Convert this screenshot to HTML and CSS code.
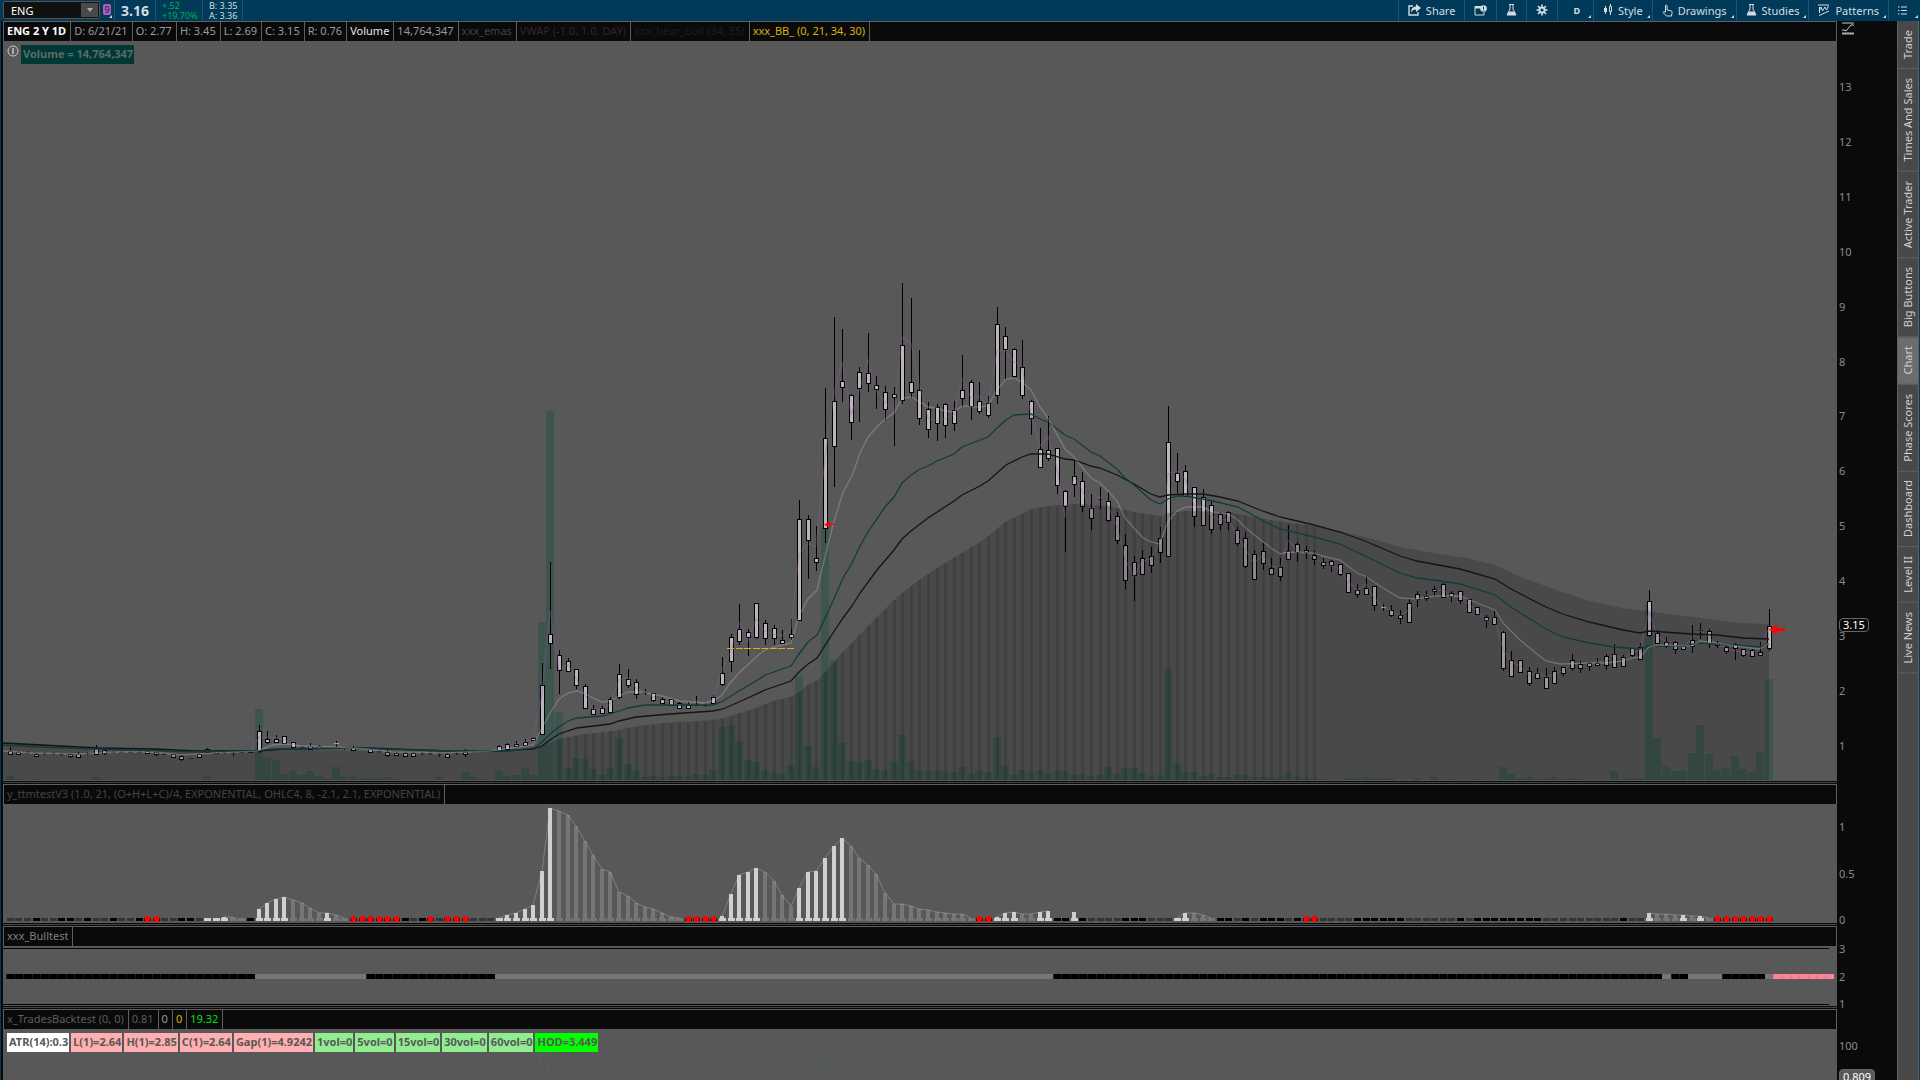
FILE: index.html
```html
<!DOCTYPE html>
<html lang="en">
<head>
    <meta charset="UTF-8">
    <meta name="viewport" content="width=device-width, initial-scale=1.0">
    <title>ENG 2 Y 1D</title>
    <link rel="stylesheet" href="styles.css">
</head>
<body>
    <header class="toolbar">
        <form class="symbol">
            <input class="symbol-input" type="text" value="ENG" aria-label="Symbol">
            <button class="symbol-drop" type="button" aria-label="Symbol list"><svg width="8" height="5" viewBox="0 0 8 5"><path d="M1 0h6L4 4z" fill="#aaa"/></svg></button>
        </form>
        <button class="link-badge corner" type="button" aria-label="Link group 9"><span>9</span></button>
        <div class="quote last">3.16</div>
        <div class="quote change"><span>+.52</span><span>+19.70%</span></div>
        <div class="quote bidask"><span>B: 3.35</span><span>A: 3.36</span></div>
        <nav class="tools">
            <button class="tool" type="button">
                <svg width="13" height="12" viewBox="0 0 13 12"><path d="M5 2H1v9h9V8" fill="none" stroke="#d4dde2" stroke-width="1.4"/><path d="M8 0l5 4-5 4V5.500C5.500 5.500 4 6.500 3 8.500 3 5 5 2.600 8 2.500z" fill="#d4dde2"/></svg>
                Share
            </button>
            <button class="tool" type="button" aria-label="Detach">
                <svg width="13" height="11" viewBox="0 0 13 11"><path d="M7 1.500H1v8.500h9V7" fill="none" stroke="#d4dde2"/><path d="M1 2.500h6" stroke="#d4dde2" stroke-width="2"/><circle cx="9.500" cy="3.500" r="3.300" fill="#d4dde2"/><path d="M9.500 1.500v2.500M9.500 4.700v1" stroke="#003a58"/></svg>
            </button>
            <button class="tool" type="button" aria-label="Study lab">
                <svg width="11" height="12" viewBox="0 0 11 12"><path d="M3 .5h5M4 .5v4.500L1 11h9L7 5V.5" fill="none" stroke="#d4dde2"/><path d="M3 7.500h5L10 11H1z" fill="#d4dde2"/></svg>
            </button>
            <button class="tool" type="button" aria-label="Settings">
                <svg width="12" height="12" viewBox="0 0 12 12"><path d="M6 .5v11M.5 6h11M2 2l8 8M10 2l-8 8" stroke="#d4dde2" stroke-width="1.600"/><circle cx="6" cy="6" r="3.500" fill="#d4dde2"/><circle cx="6" cy="6" r="1.600" fill="#003a58"/></svg>
            </button>
            <button class="tool period corner" type="button">D</button>
            <button class="tool corner" type="button">
                <svg width="10" height="12" viewBox="0 0 10 12"><path d="M2.500 2v8M7.500 0v11" stroke="#d4dde2"/><path d="M1 4h3v4H1z" fill="#d4dde2"/><path d="M6.500 2.500h2v5h-2z" fill="#003a58" stroke="#d4dde2"/></svg>
                Style
            </button>
            <button class="tool corner" type="button">
                <svg width="11" height="13" viewBox="0 0 11 13"><path d="M3.500 8V1.500q.8-1 1.600 0V6l4 .8q1.200.4 1 1.700L9.500 12h-5L1 8.500Q1.300 7.300 3.500 8z" fill="none" stroke="#d4dde2"/></svg>
                Drawings
            </button>
            <button class="tool corner" type="button">
                <svg width="11" height="12" viewBox="0 0 11 12"><path d="M3 .5h5M4 .5v4.500L1 11h9L7 5V.5" fill="none" stroke="#d4dde2"/><path d="M3 7.500h5L10 11H1z" fill="#d4dde2"/></svg>
                Studies
            </button>
            <button class="tool corner" type="button">
                <svg width="12" height="12" viewBox="0 0 12 12"><path d="M0 1h11M1 11.500L11 7M1 7l2-4 1.500 4L7 3l1.500 3L10.500 2M1.500 3v6" fill="none" stroke="#d4dde2"/></svg>
                Patterns
            </button>
            <button class="tool menu corner" type="button" aria-label="Menu">
                <svg width="9" height="9" viewBox="0 0 9 9"><path d="M0 1h1.500M0 4.500h1.500M0 8h1.500M3 1h6M3 4.500h6M3 8h6" stroke="#d4dde2"/></svg>
            </button>
        </nav>
    </header>

    <div class="workspace">
        <main class="charts">
            <section class="panel price-panel">
                <div class="panel-head">
                    <span class="cell bold">ENG 2 Y 1D</span>
                    <span class="cell">D: 6/21/21</span>
                    <span class="cell">O: 2.77</span>
                    <span class="cell">H: 3.45</span>
                    <span class="cell">L: 2.69</span>
                    <span class="cell">C: 3.15</span>
                    <span class="cell">R: 0.76</span>
                    <span class="cell white">Volume</span>
                    <span class="cell">14,764,347</span>
                    <span class="cell dim">xxx_emas</span>
                    <span class="cell plum">VWAP (-1.0, 1.0, DAY)</span>
                    <span class="cell faint">xxx_bear_bull (34, 55)</span>
                    <span class="cell gold">xxx_BB_ (0, 21, 34, 30)</span>
                </div>
                <div class="plot">
                    <svg id="price" class="canvas" viewBox="3 41 1834 740" preserveAspectRatio="none"></svg>
                    <div class="plot-labels">
                        <svg width="12" height="12" viewBox="0 0 12 12"><circle cx="6" cy="6" r="5" fill="none" stroke="#c8c8c8"/><path d="M6 3v6" stroke="#c8c8c8" stroke-width="1.500"/></svg>
                        <span class="volume-label">Volume = 14,764,347</span>
                    </div>
                </div>
                <div class="axis price-axis">
                    <svg class="axis-icon" width="14" height="13" viewBox="0 0 14 13"><path d="M1 1h12" stroke="#ccc"/><path d="M1 11.500h12" stroke="#aaa" stroke-width="2"/><path d="M1 8h2l2 1 5-6h3" fill="none" stroke="#ccc"/></svg>
                    <ol class="ticks">
                        <li>13</li><li>12</li><li>11</li><li>10</li><li>9</li><li>8</li><li>7</li><li>6</li><li>5</li><li>4</li><li>3</li><li>2</li><li>1</li>
                    </ol>
                    <span class="tag last-tag">3.15</span>
                </div>
            </section>

            <section class="panel squeeze-panel">
                <div class="panel-head">
                    <span class="cell dim">y_ttmtestV3 (1.0, 21, (O+H+L+C)/4, EXPONENTIAL, OHLC4, 8, -2.1, 2.1, EXPONENTIAL)</span>
                </div>
                <div class="plot"><svg id="squeeze" class="canvas" viewBox="3 804 1834 119" preserveAspectRatio="none"></svg></div>
                <div class="axis squeeze-axis"><span>1</span><span>0.5</span><span>0</span></div>
            </section>

            <section class="panel bull-panel">
                <div class="panel-head"><span class="cell soft">xxx_Bulltest</span></div>
                <div class="plot"><svg id="bull" class="canvas" viewBox="3 946 1834 60" preserveAspectRatio="none"></svg></div>
                <div class="axis bull-axis"><span>3</span><span>2</span><span>1</span></div>
            </section>

            <section class="panel trades-panel">
                <div class="panel-head">
                    <span class="cell soft2">x_TradesBacktest (0, 0)</span>
                    <span class="cell soft2">0.81</span>
                    <span class="cell">0</span>
                    <span class="cell gold">0</span>
                    <span class="cell green">19.32</span>
                </div>
                <div class="plot">
                    <svg id="trades" class="canvas" viewBox="3 1029 1834 51" preserveAspectRatio="none"></svg>
                    <div class="chips">
                        <span class="chip">ATR(14):0.3</span>
                        <span class="chip pink">L(1)=2.64</span>
                        <span class="chip pink">H(1)=2.85</span>
                        <span class="chip pink">C(1)=2.64</span>
                        <span class="chip pink">Gap(1)=4.9242</span>
                        <span class="chip mint">1vol=0</span>
                        <span class="chip mint">5vol=0</span>
                        <span class="chip mint">15vol=0</span>
                        <span class="chip mint">30vol=0</span>
                        <span class="chip mint">60vol=0</span>
                        <span class="chip lime">HOD=3.449</span>
                    </div>
                </div>
                <div class="axis trades-axis"><span>100</span><span class="tag study-tag">0.809</span></div>
            </section>
        </main>

        <aside class="gadgets">
            <button class="gadget" type="button">Trade</button>
            <button class="gadget" type="button">Times And Sales</button>
            <button class="gadget" type="button">Active Trader</button>
            <button class="gadget" type="button">Big Buttons</button>
            <button class="gadget active" type="button">Chart</button>
            <button class="gadget" type="button">Phase Scores</button>
            <button class="gadget" type="button">Dashboard</button>
            <button class="gadget" type="button">Level II</button>
            <button class="gadget" type="button">Live News</button>
        </aside>
    </div>

    <script src="chart.js"></script>
</body>
</html>
```
FILE: styles.css
```css
* {
    box-sizing: border-box;
}

body {
    display: flex;
    flex-direction: column;
    height: 100vh;
    margin: 0;
    overflow: hidden;
    background-color: #003a58;
    color: #9a9a9a;
    font-family: "Noto Sans", "Open Sans", sans-serif;
    font-size: 11px;
}

button, input {
    margin: 0;
    padding: 0;
    border: 0;
    background: none;
    color: inherit;
    font: inherit;
}

/* top toolbar */
.toolbar {
    display: flex;
    flex: none;
    height: 21px;
    padding-left: 3px;
    color: #d4dde2;
}

.symbol {
    display: flex;
    width: 97px;
    height: 18px;
    margin-top: 1px;
    border: 1px solid #555;
    border-radius: 2px;
    background-color: #111;
}

.symbol-input {
    flex: 1;
    min-width: 0;
    padding-left: 7px;
    color: #fff;
}

.symbol-drop {
    display: flex;
    align-items: center;
    justify-content: center;
    width: 17px;
    margin: 1px;
    background-color: #4a4a4a;
}

.link-badge {
    width: 14px;
    padding-left: 3px;
    text-align: left;
}

.link-badge span {
    display: block;
    width: 8px;
    height: 11px;
    margin-bottom: 3px;
    border-radius: 2px;
    background-color: #b45ac8;
    color: #222;
    font-size: 9px;
    line-height: 11px;
    text-align: center;
}

.quote {
    display: flex;
    flex-direction: column;
    justify-content: center;
    padding: 0 6px;
    border-left: 1px solid #1d5470;
    line-height: 10px;
}

.last {
    width: 41px;
    font-size: 14px;
    font-weight: bold;
}

.change {
    width: 47px;
    color: #00b050;
    font-size: 9px;
}

.bidask {
    width: 41px;
    border-right: 1px solid #1d5470;
    font-size: 9px;
    white-space: nowrap;
}

.tools {
    display: flex;
    margin-left: auto;
}

.tool {
    display: flex;
    align-items: center;
    gap: 5px;
    padding: 0 9px 1px;
    border-left: 1px solid #1d5470;
}

.tool.period {
    padding: 0 13px 1px 15px;
    font-size: 9px;
    font-weight: bold;
}

.tool.menu {
    padding-right: 13px;
}

.corner {
    position: relative;
}

.corner::after {
    content: "";
    position: absolute;
    right: 2px;
    bottom: 3px;
    border-left: 3px solid transparent;
    border-bottom: 3px solid #d4dde2;
}

/* workspace */
.workspace {
    display: flex;
    flex: 1;
    min-height: 0;
    padding-right: 1px;
    border-left: 1px solid #003a58;
}

.charts {
    display: flex;
    flex: 1;
    flex-direction: column;
    gap: 3px;
    min-width: 0;
    padding-left: 2px;
    background: #0a0a0a;
}

.panel {
    position: relative;
    display: grid;
    grid-template-columns: minmax(0, 1fr) 60px;
    grid-template-rows: 20px minmax(0, 1fr);
}

/* thin rule inside the gap between two panels */
.panel + .panel::before {
    content: "";
    position: absolute;
    top: -2px;
    left: 0;
    right: 60px;
    height: 1px;
    background-color: #444;
}

.price-panel {
    flex: 1;
    min-height: 0;
}

.squeeze-panel {
    height: 139px;
}

.bull-panel {
    height: 80px;
}

.trades-panel {
    height: 71px;
}

.panel-head {
    display: flex;
    border: 1px solid #606060;
    border-bottom: 0;
    background-color: #0a0a0a;
    white-space: nowrap;
    overflow: hidden;
}

.cell {
    padding: 0 4px 0 3px;
    border-right: 1px solid #606060;
    line-height: 18px;
}

.bold {
    color: #fff;
    font-weight: bold;
}

.white { color: #e8e8e8; }
.dim { color: #444; }
.soft { color: #808080; }
.soft2 { color: #5c5c5c; }
.plum { color: #35203a; }
.faint { color: #1e1e1e; }
.gold { color: #d8b010; }
.green { color: #00e010; }

.plot {
    position: relative;
    grid-column: 1;
    background-color: #585858;
    overflow: hidden;
}

.canvas {
    position: absolute;
    inset: 0;
    width: 100%;
    height: 100%;
}

.plot-labels {
    position: relative;
    display: flex;
    gap: 2px;
    padding: 4px 4px;
}

.volume-label {
    padding: 0 1px 1px 2px;
    background-color: #003835;
    color: #5a6a68;
    font-weight: bold;
    line-height: 18px;
}

/* value axes */
.axis {
    position: relative;
    display: flex;
    flex-direction: column;
    grid-column: 2;
    grid-row: 1 / 3;
    padding-left: 2px;
    background-color: #0a0a0a;
    color: #8a8a8a;
    line-height: 12px;
    overflow: hidden;
}

.axis-icon {
    position: absolute;
    top: 1px;
    left: 4px;
}

.price-axis {
    padding-top: 39px;
    padding-bottom: 8px;
}

.ticks {
    display: flex;
    flex: 1;
    flex-direction: column;
    margin: 0;
    padding: 0;
    list-style: none;
}

.ticks li {
    display: flex;
    flex: 1;
    align-items: center;
}

.squeeze-axis {
    justify-content: space-between;
    margin-bottom: -3px;
    padding-top: 37px;
}

.bull-axis {
    justify-content: space-between;
    margin-bottom: -4px;
    padding-top: 17px;
}

.trades-axis {
    padding-top: 31px;
}

.tag {
    position: absolute;
    left: 2px;
    padding: 0 3px;
    border: 1px solid #666;
    border-radius: 4px;
    background-color: #0a0a0a;
    color: #fff;
}

.last-tag {
    top: 78.6%;
}

.study-tag {
    bottom: -5px;
    background-color: #585858;
    line-height: 14px;
}

.chips {
    position: relative;
    display: flex;
    gap: 2px;
    padding: 4px;
    white-space: nowrap;
}

.chip {
    padding: 0 1px 1px 2px;
    background-color: #fff;
    color: #585858;
    font-weight: bold;
    line-height: 18px;
}

.pink { background-color: #ffafaf; }
.mint { background-color: #90ee90; }
.lime { background-color: #00ff00; }

/* right gadget tabs */
.gadgets {
    display: flex;
    flex-direction: column;
    width: 22px;
    border-left: 1px solid #606060;
    border-right: 1px solid #606060;
    background-color: #484848;
}

.gadget {
    padding: 9px 0;
    border-top: 1px solid #606060;
    color: #d0d0d0;
    line-height: 20px;
    writing-mode: vertical-rl;
    transform: rotate(180deg);
}

.active {
    background-color: #6c6c6c;
}
```
FILE: chart.js
```js
const NS = "http://www.w3.org/2000/svg";
const STEP = 8.581;

function barX(i) {
    return Math.round(9.8 + STEP * i);
}

function add(parent, tag, attrs) {
    const el = document.createElementNS(NS, tag);
    for (const key in attrs) {
        el.setAttribute(key, attrs[key]);
    }
    parent.appendChild(el);
    return el;
}

function rect(parent, x, y, w, h, fill) {
    return add(parent, "rect", { x: x, y: y, width: w, height: h, fill: fill, "shape-rendering": "crispEdges" });
}

// "x,y x,y ..." -> [[x, y], ...]
function points(text) {
    return text.trim().split(/\s+/).map(p => p.split(",").map(Number));
}

// value of a polyline at x
function at(line, x) {
    for (let k = 1; k < line.length; k++) {
        if (x <= line[k][0]) {
            const [x0, y0] = line[k - 1];
            const [x1, y1] = line[k];
            return y0 + (y1 - y0) * (x - x0) / (x1 - x0);
        }
    }
    return line[line.length - 1][1];
}

// high, body top, body bottom, low
const candles = `747,751,754,755 751,752,754,754 751,752,753,754 753,754,756,757 752,753,754,755 752,753,754,755 753,754,755,756
754,754,756,758 752,754,757,757 752,753,754,755 745,748,754,754 748,750,753,755 751,752,753,753 751,752,753,753 751,752,753,753 751,752,753,753
751,751,753,753 751,752,754,756 753,754,755,755 754,754,757,758 755,756,759,761 758,758,759,759 753,754,757,757 748,749,752,753
750,751,753,753 751,752,753,754 752,753,754,756 751,752,753,753 751,752,753,753 725,731,751,753 731,739,742,744 735,739,742,742
736,736,743,743 742,742,747,748 746,747,748,749 743,746,749,750 745,746,748,749 747,748,749,749 741,743,744,747 748,748,749,750
746,748,750,750 748,748,749,749 748,749,752,753 750,751,752,753 750,752,755,757 752,753,755,755 752,753,756,756 752,753,756,756
752,753,754,755 750,753,754,755 753,754,755,757 753,754,757,757 752,753,754,755 749,752,754,757 751,751,752,753 751,751,752,752
751,751,752,752 745,746,750,750 743,744,749,749 741,744,746,747 739,742,745,745 737,738,740,741 663,685,734,734 562,634,643,669
650,655,670,694 658,661,671,672 669,669,685,689 684,686,708,708 705,709,714,715 706,708,713,713 697,699,712,712 664,674,697,699
669,679,685,688 679,682,694,699 689,692,693,695 693,693,700,702 697,699,703,705 699,699,705,706 702,703,708,709 702,705,708,708
696,705,706,706 703,705,706,707 695,697,703,703 657,673,684,686 634,637,661,672 604,629,641,645 629,632,637,656 603,603,637,639
620,623,638,645 625,628,638,645 630,640,643,643 619,634,637,640 500,519,620,620 515,519,540,579 526,558,562,571 388,438,528,543
317,401,446,487 329,381,387,402 394,395,422,440 367,372,388,422 333,373,383,392 376,385,389,409 386,392,409,420 387,394,397,446
283,345,400,404 298,382,392,398 350,390,418,425 402,409,429,438 404,407,423,441 403,404,425,438 401,410,423,431 355,390,398,407
380,382,406,420 382,401,411,414 396,403,415,418 307,324,395,404 327,336,349,379 348,349,376,378 340,367,395,399 400,401,418,435
428,449,467,468 416,450,458,461 448,448,485,494 490,491,506,552 460,476,484,497 472,481,506,512 494,508,518,530 487,499,500,509
492,501,520,522 512,516,540,544 534,545,580,589 556,562,575,601 550,558,574,575 547,556,565,573 527,538,552,563 406,442,556,557
453,473,481,493 465,471,496,496 487,487,516,527 489,497,525,525 501,505,529,534 512,514,524,530 511,512,522,530 527,530,543,546
532,538,566,568 550,554,579,579 543,551,563,570 558,568,574,575 558,567,576,581 525,551,559,559 542,544,552,562 546,550,552,559
551,555,559,565 558,562,565,569 560,561,565,572 564,564,574,576 573,573,592,592 584,590,594,598 576,588,594,594 586,586,605,611
604,607,608,611 605,610,615,617 610,615,618,624 599,603,622,623 591,594,599,607 591,596,598,601 586,589,591,596 583,584,597,598
591,593,596,602 591,591,600,604 599,599,612,612 607,607,614,615 615,617,620,628 611,617,624,625 631,632,668,671 651,660,676,676
660,660,672,673 667,671,683,686 668,673,678,678 668,677,688,688 667,671,683,683 667,667,673,676 654,660,668,671 661,664,668,673
662,663,666,671 658,663,665,666 654,656,665,670 644,654,667,667 655,657,666,666 648,648,655,657 643,647,659,659 590,601,635,637
630,633,643,643 637,642,646,648 641,642,649,654 645,646,649,650 625,640,646,653 623,630,631,639 629,631,643,648 641,643,645,648
644,647,651,654 643,644,648,660 649,649,655,657 649,650,656,657 642,652,655,655 609,626,648,651`.trim().split(/\s+/).map(c => c.split(",").map(Number));

// bar index -> top of the volume bar
const volume = {
    0: 776, 1: 779, 3: 779, 10: 777, 11: 779, 23: 776, 29: 709, 30: 757, 31: 760, 32: 774, 33: 771, 34: 775, 35: 771, 36: 776,
    37: 778, 38: 767, 39: 777, 40: 776, 41: 778, 42: 778, 43: 778, 44: 777, 45: 779, 50: 777, 53: 772, 54: 777, 55: 779, 57: 771,
    58: 776, 59: 775, 60: 768, 61: 775, 62: 622, 63: 411, 64: 712, 65: 768, 66: 758, 67: 759, 68: 769, 69: 775, 70: 768, 71: 738,
    72: 764, 73: 771, 74: 777, 75: 776, 76: 777, 77: 776, 78: 776, 79: 777, 80: 774, 81: 775, 82: 770, 83: 727, 84: 725, 85: 741,
    86: 760, 87: 762, 88: 770, 89: 773, 90: 774, 91: 765, 92: 676, 93: 746, 94: 767, 95: 527, 96: 660, 97: 743, 98: 761, 99: 762,
    100: 760, 101: 769, 102: 770, 103: 762, 104: 735, 105: 761, 106: 770, 107: 770, 108: 771, 109: 771, 110: 772, 111: 767,
    112: 773, 113: 770, 114: 772, 115: 737, 116: 765, 117: 775, 118: 770, 119: 772, 120: 770, 121: 773, 122: 771, 123: 771,
    124: 775, 125: 774, 126: 776, 127: 775, 128: 767, 129: 774, 130: 768, 131: 768, 132: 773, 133: 776, 134: 775, 135: 668,
    136: 764, 137: 772, 138: 772, 139: 776, 140: 774, 141: 777, 142: 777, 143: 775, 144: 775, 145: 777, 146: 777, 147: 778,
    148: 777, 149: 772, 150: 777, 151: 778, 152: 778, 153: 779, 156: 778, 157: 778, 158: 777, 159: 778, 160: 778, 161: 778,
    164: 778, 166: 777, 168: 779, 171: 779, 174: 767, 175: 774, 176: 778, 177: 777, 178: 779, 179: 778, 180: 777, 181: 779,
    182: 778, 183: 779, 187: 771, 188: 779, 189: 778, 190: 778, 191: 604, 192: 738, 193: 766, 194: 771, 195: 771, 196: 753,
    197: 725, 198: 754, 199: 771, 200: 768, 201: 756, 202: 769, 203: 772, 204: 752, 205: 679
};

const cloud = points(`3,742 80,746 200,751 300,750 440,752 533,749 550,743 559,739 568,737 585,734 607,732 633,727 663,723 700,721
720,719 747,711 773,701 793,696 808,685 818,680 842,653 867,627 893,601 912,585 943,564 980,542 988,536 1005,522 1031,509
1048,506 1074,504 1108,506 1134,512 1160,516 1168,513 1185,511 1228,512 1270,520 1313,526 1340,531 1373,539 1400,547
1433,553 1467,558 1495,565 1523,578 1560,591 1590,601 1623,608 1647,611 1693,617 1740,623 1769,624`);

const fastEma = `3,751 33,753 78,754 122,752 155,752 180,755 216,753 257,751 273,745 286,744 302,746 335,747 367,749 392,752 441,753
490,751 533,745 542,728 550,713 559,699 568,693 577,691 585,694 593,698 602,702 610,701 619,696 628,692 643,692 662,696
680,701 705,703 713,701 722,695 730,683 739,673 756,657 765,650 782,645 791,643 799,616 808,599 817,590 825,557 833,525
843,492 852,476 860,453 868,437 877,427 885,419 894,413 902,398 911,397 920,402 928,407 937,408 945,411 954,412 962,406
980,407 988,406 997,390 1006,379 1014,378 1022,382 1031,390 1040,407 1048,418 1065,449 1074,457 1091,478 1100,483
1108,491 1117,501 1125,518 1134,528 1143,538 1151,542 1160,544 1168,521 1177,511 1186,507 1203,507 1213,512 1228,514
1238,520 1247,529 1262,541 1271,548 1280,554 1288,552 1314,553 1323,556 1340,560 1357,573 1365,576 1383,588 1400,598
1417,599 1434,596 1460,596 1477,603 1495,610 1503,623 1511,631 1520,640 1537,654 1546,661 1560,664 1589,663 1606,663
1623,661 1632,658 1640,657 1649,647 1657,645 1692,646 1700,641 1717,643 1735,646 1760,649 1769,643`;

const midEma = `3,745 41,747 96,749 163,751 204,752 257,751 273,749 335,748 380,749 449,751 510,751 534,748 542,742 550,734 559,727
568,721 577,718 603,716 619,711 628,708 645,705 680,705 713,705 723,701 739,691 756,681 765,675 791,666 799,654 808,642
817,635 833,601 843,578 852,563 860,546 868,532 885,507 894,497 902,483 911,475 920,469 928,466 937,461 954,454 962,447
980,440 988,437 997,428 1006,420 1014,415 1031,414 1040,419 1048,422 1065,435 1074,439 1091,452 1100,456 1117,469
1125,478 1134,485 1151,500 1160,504 1168,499 1177,496 1186,496 1213,501 1238,507 1262,520 1280,529 1314,537 1340,544
1365,556 1400,573 1417,578 1434,580 1460,584 1495,595 1511,607 1546,629 1563,637 1589,643 1614,647 1640,649 1649,646
1683,646 1700,643 1735,645 1760,647 1769,644`;

const slowEma = `3,743 41,745 96,748 155,749 196,751 257,751 286,749 367,748 449,751 498,751 533,749 542,746 550,740 559,734 577,728
610,724 619,721 636,717 670,714 713,711 723,709 739,702 765,690 791,681 799,672 808,664 817,658 833,633 843,618 852,606
860,593 877,570 894,550 902,539 911,531 928,518 954,501 962,495 980,486 988,481 1006,465 1022,457 1031,454 1048,454
1065,459 1074,460 1091,466 1100,468 1117,475 1134,484 1151,494 1160,497 1168,495 1185,494 1203,494 1220,497 1238,501
1260,510 1280,517 1314,525 1340,532 1365,541 1400,556 1417,561 1460,569 1495,579 1511,589 1546,607 1563,614 1589,622
1623,630 1640,633 1649,631 1692,634 1717,635 1743,638 1769,639`;

function drawPrice() {
    const svg = document.getElementById("price");
    const base = 780;

    for (const i in volume) {
        rect(svg, barX(i) - 4, volume[i], 8, base - volume[i], "rgba(5,78,61,0.32)");
    }

    candles.forEach(([high, top, bottom, low], i) => {
        const x = barX(i);
        rect(svg, x, high, 1, Math.max(low - high, 1), "#000");
        if (i === 38 || i === 160) {
            rect(svg, x - 2, top, 5, 1, i === 38 ? "#d8b010" : "#bbb");
        } else if (bottom - top < 2) {
            rect(svg, x - 2, top, 5, 1, "#111");
        } else {
            rect(svg, x - 2, top, 5, bottom - top + 1, "#000");
            rect(svg, x - 1, top + 1, 3, bottom - top - 1, "#bab6ba");
        }
    });

    // study cloud and its striped part
    const shape = cloud.map(p => p.join(",")).join(" ");
    add(svg, "polygon", { points: shape + " 1769," + base + " 3," + base, fill: "rgba(0,0,0,0.16)" });
    for (let i = 64; i <= 152; i++) {
        const y = Math.round(at(cloud, barX(i)));
        rect(svg, barX(i) - 1, y, 3, base - y, "rgba(0,0,0,0.12)");
    }

    const typical = candles.map(([h, t, b, l], i) => barX(i) + "," + (h * 0.55 + l * 0.45)).join(" ");
    const lines = [
        [typical, "rgba(150,90,165,0.35)"],
        [slowEma, "#141414"],
        [midEma, "#123c3c"],
        [fastEma, "rgba(200,200,200,0.32)"]
    ];
    for (const [pts, stroke] of lines) {
        add(svg, "polyline", { points: pts, fill: "none", stroke: stroke, "stroke-width": 1.3 });
    }

    for (let x = 727; x < 795; x += STEP) {
        rect(svg, Math.round(x), 648, 7, 1, "#d8b010");
    }

    // trade arrows
    add(svg, "path", { d: "M824 524.5l6-3v2.500h5v1h-5v2.500z", fill: "#f00" });
    add(svg, "path", { d: "M1769 629.5l8-5v3.500h8v3h-8v3.500z", fill: "#f00" });
}

// d = dark, k = black, r = red dot, w = rising, g = falling
const squeezeState =
    "dddkddkkdkddkddkrrddkkdwwwggkwwwwggggwggrrrrrrkdkrdrrrddd" +
    "wwwwwwwgggggggggggggggrrrrwwwwwggggwwwwwwgggggggggggggggrr" +
    "wwwggwwkkwkddddkkkdddwwgggkkdkdkkkdkrrddddkkkkkkddddddkd" +
    "kkkkkkkkdddddddddkddwgggwgwgrrrrrrr";

const squeezeTop = {
    25: 917, 26: 917, 29: 909, 30: 903, 31: 899, 32: 897, 33: 900, 34: 903, 35: 908, 36: 913, 37: 913, 38: 915, 39: 918,
    57: 918, 58: 915, 59: 913, 60: 909, 61: 905, 62: 871, 63: 808, 64: 811, 65: 815, 66: 826, 67: 841, 68: 855, 69: 869,
    70: 872, 71: 892, 72: 896, 73: 903, 74: 907, 75: 909, 76: 913, 77: 917, 78: 918, 83: 916, 84: 894, 85: 875, 86: 872,
    87: 868, 88: 872, 89: 881, 90: 895, 91: 906, 92: 888, 93: 872, 94: 871, 95: 858, 96: 846, 97: 838, 98: 846, 99: 858,
    100: 865, 101: 874, 102: 893, 103: 904, 104: 904, 105: 906, 106: 909, 107: 910, 108: 912, 109: 913, 110: 914, 111: 914,
    112: 918, 115: 917, 116: 913, 117: 912, 118: 914, 119: 914, 120: 912, 121: 911, 124: 912, 136: 918, 137: 913, 138: 913,
    139: 915, 140: 918, 191: 913, 192: 914, 193: 914, 194: 915, 195: 915, 196: 916, 197: 916, 198: 918
};

function drawSqueeze() {
    const svg = document.getElementById("squeeze");
    const colors = { d: "#333", k: "#000", r: "#000", w: "#d0d0d0", g: "#767676" };
    let run = [];

    [...squeezeState].forEach((state, i) => {
        const x = barX(i);
        rect(svg, x - 3, 918, 7, 3, colors[state]);
        if (squeezeTop[i]) {
            rect(svg, x - 2, squeezeTop[i], 4, 921 - squeezeTop[i], colors[state]);
            run.push(x + "," + squeezeTop[i]);
        } else {
            add(svg, "polyline", { points: run.join(" "), fill: "none", stroke: "rgba(200,200,200,0.35)" });
            run = [];
        }
        if (state === "r") {
            add(svg, "circle", { cx: x + 0.5, cy: 919, r: 3, fill: "#f00" });
        }
    });
}

// first bar, bar after the last, colour
const bullRuns = [
    [0, 29, "#000"], [29, 42, "#767676"], [42, 57, "#000"], [57, 122, "#767676"], [122, 193, "#000"], [193, 194, "#767676"],
    [194, 196, "#000"], [196, 200, "#767676"], [200, 205, "#000"], [205, 206, "#767676"], [206, 213, "#ff8299"]
];

function drawBull() {
    const svg = document.getElementById("bull");
    rect(svg, 3, 948, 1826, 1, "#000");
    rect(svg, 3, 1004, 1826, 1, "#000");
    for (const [from, to, color] of bullRuns) {
        for (let i = from; i < to; i++) {
            const x = barX(i) - 4;
            const w = barX(i + 1) - 4 - x;
            rect(svg, x, 974, w, 5, color);
            rect(svg, x, 974, 1, 5, "rgba(110,110,110,0.25)");
        }
    }
}

function drawTrades() {
    const svg = document.getElementById("trades");
    const peaks = [[96, 1076], [205, 1076], [259, 1063], [543, 1052], [620, 1070], [727, 1069], [799, 1054], [826, 1061], [861, 1075],
        [902, 1075], [997, 1073], [1168, 1063], [1288, 1076], [1410, 1076], [1555, 1074], [1649, 1065], [1768, 1072]];
    for (const [x, y] of peaks) {
        add(svg, "polyline", {
            points: (x - 9) + ",1080 " + x + "," + y + " " + (x + 9) + ",1080",
            fill: "none", stroke: "#46704a", "stroke-dasharray": "3 1"
        });
    }
}

drawPrice();
drawSqueeze();
drawBull();
drawTrades();
```
